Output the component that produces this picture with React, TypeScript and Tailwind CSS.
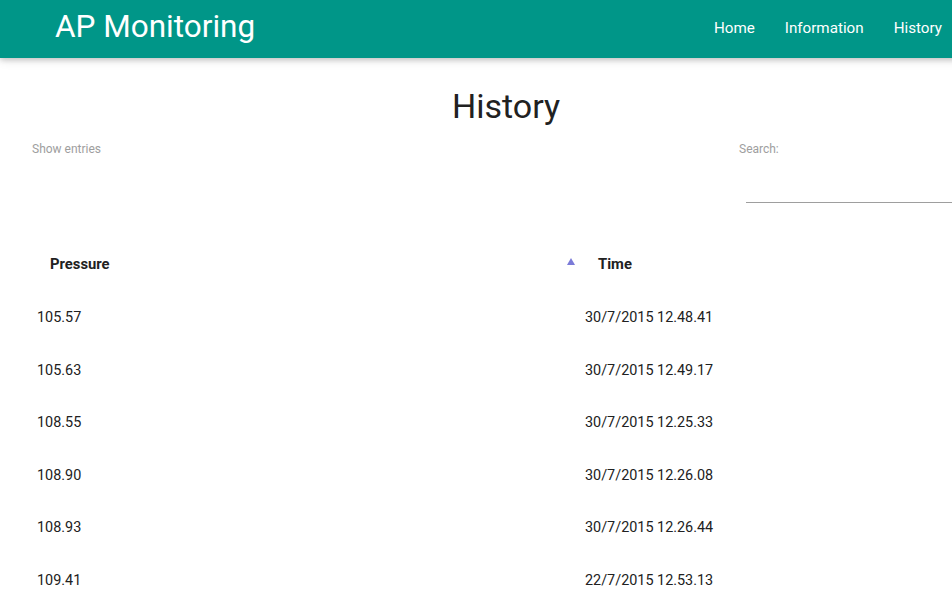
import React from "react";

const rows = [
  { pressure: "105.57", time: "30/7/2015 12.48.41" },
  { pressure: "105.63", time: "30/7/2015 12.49.17" },
  { pressure: "108.55", time: "30/7/2015 12.25.33" },
  { pressure: "108.90", time: "30/7/2015 12.26.08" },
  { pressure: "108.93", time: "30/7/2015 12.26.44" },
  { pressure: "109.41", time: "22/7/2015 12.53.13" },
];

const links = ["Home", "Information", "History"];

export default function App() {
  return (
    <div className="w-[952px] h-[597px] overflow-hidden bg-white font-['Roboto',sans-serif]">
      <div className="w-[1012px]">
        {/* Navbar */}
        <nav className="h-[58px] bg-[#009688] shadow-[0_2px_5px_0_rgba(0,0,0,0.16),0_2px_10px_0_rgba(0,0,0,0.12)] relative z-10">
          <div className="flex items-center justify-between h-full px-[55px]">
            <a href="#" className="text-white text-[31.5px] leading-none -mt-[4px]">
              AP Monitoring
            </a>
            <ul className="flex items-center h-full -mt-[2px]">
              {links.map((l) => (
                <li key={l}>
                  <a href="#" className="px-[15px] text-white text-[15.2px]">
                    {l}
                  </a>
                </li>
              ))}
            </ul>
          </div>
        </nav>

        {/* Main */}
        <main className="px-[32px]">
          <h4 className="text-center text-[34px] text-[#212121] leading-none mt-[31px] h-[34px]">
            History
          </h4>
          <div className="flex justify-between mt-[18px]">
            <div className="text-[12px] text-[#9e9e9e] leading-[14px] pt-[1px]">Show entries</div>
            <div className="w-[241px] flex flex-col">
              <label className="text-[12px] text-[#9e9e9e] leading-[14px] pt-[1px]">Search:</label>
              <input
                type="search"
                className="ml-[7px] mt-[29px] h-[18px] border-b border-[#9e9e9e] outline-none"
              />
            </div>
          </div>

          <table className="w-[948px] mt-[35px] border-collapse text-[14.4px] text-[#212121]">
            <thead>
              <tr className="h-[54px]">
                <th className="w-[548px] text-left font-bold text-[14.8px] pl-[18px] pr-[5px] pb-[2px] relative">
                  Pressure
                  <span className="absolute right-[5px] top-[20px] w-0 h-0 border-l-[4px] border-r-[4px] border-b-[7px] border-l-transparent border-r-transparent border-b-[#7b7bd8]" />
                </th>
                <th className="text-left font-bold text-[14.8px] pl-[18px] pb-[2px]">Time</th>
              </tr>
            </thead>
            <tbody>
              {rows.map((r) => (
                <tr key={r.time}>
                  <td className="px-[5px] py-[15px] leading-[22.5px]">{r.pressure}</td>
                  <td className="px-[5px] py-[15px] leading-[22.5px]">{r.time}</td>
                </tr>
              ))}
            </tbody>
          </table>
        </main>
      </div>
    </div>
  );
}
